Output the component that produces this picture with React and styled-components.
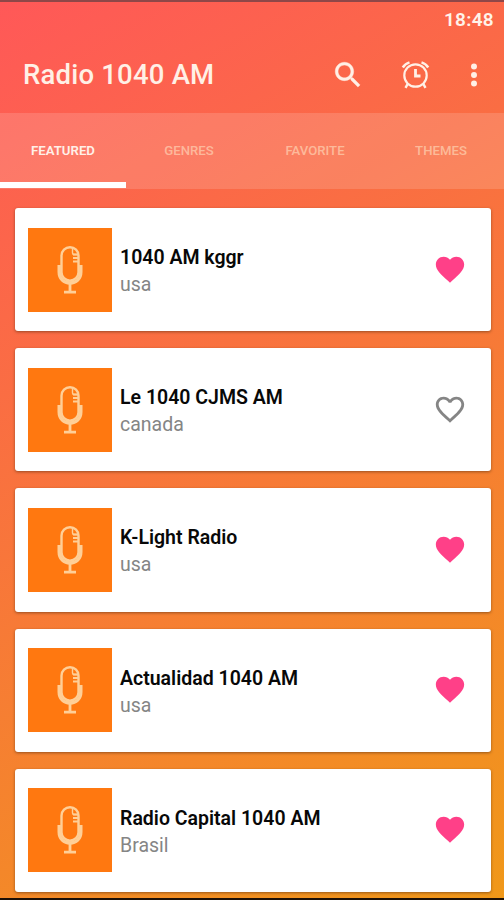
import React from "react";
import styled, { createGlobalStyle } from "styled-components";

const accent = '#ff4088';
const font = 'Roboto, "Liberation Sans", sans-serif';

const GlobalStyle = createGlobalStyle`
  * {
    box-sizing: border-box;
  }

  body {
    margin: 0;
    font-family: ${font};
  }
`;

const Screen = styled.div`
  display: flex;
  flex-direction: column;
  width: 504px;
  height: 900px;
  overflow: hidden;
  border-top: 2px solid #8f4748;
  border-bottom: 2px solid #1c0f05;
  background: linear-gradient(150deg, #ff5858, #f09819) border-box;
`;

const StatusBar = styled.div`
  height: 34px;
  padding: 7px 10px 0 0;
  color: #fff3ea;
  font-size: 19px;
  font-weight: 600;
  line-height: 22px;
  letter-spacing: 0.3px;
  text-align: right;
`;

const Toolbar = styled.header`
  display: flex;
  align-items: center;
  height: 77px;
  padding: 0 13px 0 23px;
  color: #fff0e6;
`;

const Title = styled.h1`
  flex: 1;
  margin: 0;
  font-size: 27.5px;
  font-weight: 500;
  line-height: 32px;
  letter-spacing: 0.2px;
`;

const Action = styled.button`
  display: flex;
  margin: 0 0 0 ${props => props.$gap || 0}px;
  padding: 0;
  border: 0;
  background: none;
  color: inherit;
`;

const Tabs = styled.nav`
  display: grid;
  grid-template-columns: repeat(4, 1fr);
  height: 76px;
  background: rgba(255, 255, 255, 0.15);
`;

const Tab = styled.a`
  display: flex;
  align-items: center;
  justify-content: center;
  border-top: 6px solid transparent;
  border-bottom: 6px solid ${props => (props.$active ? '#fff' : 'transparent')};
  margin-bottom: 1px;
  color: ${props => (props.$active ? '#fff0e8' : 'rgba(255, 225, 195, 0.6)')};
  font-size: 13.2px;
  font-weight: ${props => (props.$active ? 600 : 500)};
`;

const StationList = styled.ul`
  display: flex;
  flex-direction: column;
  gap: 17px;
  margin: 0;
  padding: 19px 13px 0 15px;
  list-style: none;
`;

const Station = styled.li`
  display: flex;
  flex: none;
  align-items: center;
  height: 123.2px;
  padding: 0 24px 0 13px;
  border-radius: 3px;
  background: #fff;
  box-shadow: 0 1px 3px rgba(90, 50, 20, 0.6);
`;

const Cover = styled.div`
  display: flex;
  align-items: center;
  justify-content: center;
  width: 84px;
  height: 84px;
  background: #ff7810;
`;

const Info = styled.div`
  flex: 1;
  padding: 3px 0 0 8px;
`;

const Name = styled.h2`
  margin: 0;
  color: #080808;
  font-size: 19.5px;
  font-weight: 600;
  line-height: 27px;
`;

const Country = styled.p`
  margin: 0;
  color: #858585;
  font-size: 19.5px;
  line-height: 27px;
`;

const SearchIcon = () => (
  <svg width="34" height="34" viewBox="0 0 24 24" fill="currentColor" stroke="currentColor" strokeWidth="0.3">
    <path d="M15.5 14h-.79l-.28-.27C15.41 12.59 16 11.11 16 9.5 16 5.91 13.09 3 9.5 3S3 5.91 3 9.5 5.91 16 9.5 16c1.61 0 3.09-.59 4.23-1.57l.27.28v.79l5 4.99L20.49 19l-4.99-5zm-6 0C7.01 14 5 11.99 5 9.5S7.01 5 9.5 5 14 7.01 14 9.5 11.99 14 9.5 14z" />
  </svg>
);

const AlarmIcon = () => (
  <svg width="34" height="34" viewBox="0 0 34 34" fill="none" stroke="currentColor">
    <circle cx="16.5" cy="17.5" r="11.2" strokeWidth="2.2" />
    <path d="M3.8 9.5Q6 5.8 10.5 4.4M29.2 9.5Q27 5.8 22.5 4.4" strokeWidth="2.5" />
    <path d="M8.7 25.8L6.5 29.8M24.3 25.8L26.5 29.8" strokeWidth="2.4" />
    <path d="M16.5 11V18H21.5" strokeWidth="2.8" />
  </svg>
);

const MoreIcon = () => (
  <svg width="34" height="34" viewBox="0 0 24 24" fill="currentColor">
    <circle cx="12" cy="6" r="2.1" />
    <circle cx="12" cy="12" r="2.1" />
    <circle cx="12" cy="18" r="2.1" />
  </svg>
);

const MicIcon = () => (
  <svg width="28" height="50" viewBox="0 0 28 50" fill="none" stroke="#ffcf97">
    <rect x="5.5" y="2.2" width="17" height="33.5" rx="8.5" strokeWidth="2.4" />
    <path d="M3.2 20V27C3.2 34 8 38 14 38S24.8 34 24.8 27V20" strokeWidth="3.4" />
    <path d="M14 39V46M8 47.2H20" strokeWidth="2.8" />
    <path d="M16.5 3V8Q16.5 9.5 18 9.5H22" strokeWidth="1.4" />
    <path d="M17 9.5H22M17 13H22M17 16.5H22" strokeWidth="2.1" />
  </svg>
);

const Heart = ({ filled }) => (
  <svg width="34" height="34" viewBox="0 0.4 24 24" fill={filled ? accent : '#858585'}>
    {filled ? (
      <path d="M12 21.35l-1.45-1.32C5.4 15.36 2 12.28 2 8.5 2 5.42 4.42 3 7.5 3c1.74 0 3.41.81 4.5 2.09C13.09 3.81 14.76 3 16.5 3 19.58 3 22 5.42 22 8.5c0 3.78-3.4 6.86-8.55 11.54L12 21.35z" />
    ) : (
      <path d="M16.5 3c-1.74 0-3.41.81-4.5 2.09C10.91 3.81 9.24 3 7.5 3 4.42 3 2 5.42 2 8.5c0 3.78 3.4 6.86 8.55 11.54L12 21.35l1.45-1.32C18.6 15.36 22 12.28 22 8.5 22 5.42 19.58 3 16.5 3zm-4.4 15.55l-.1.1-.1-.1C7.14 14.24 4 11.39 4 8.5 4 6.5 5.5 5 7.5 5c1.54 0 3.04.99 3.57 2.36h1.87C13.46 5.99 14.96 5 16.5 5c2 0 3.5 1.5 3.5 3.5 0 2.89-3.14 5.74-7.9 10.05z" />
    )}
  </svg>
);

const tabs = ['FEATURED', 'GENRES', 'FAVORITE', 'THEMES'];

const stations = [
  { name: '1040 AM kggr', country: 'usa', favorite: true },
  { name: 'Le 1040 CJMS AM', country: 'canada', favorite: false },
  { name: 'K-Light Radio', country: 'usa', favorite: true },
  { name: 'Actualidad 1040 AM', country: 'usa', favorite: true },
  { name: 'Radio Capital 1040 AM', country: 'Brasil', favorite: true },
];

export default function App() {
  return (
    <Screen>
      <GlobalStyle />
      <StatusBar>18:48</StatusBar>
      <Toolbar>
        <Title>Radio 1040 AM</Title>
        <Action aria-label="Search"><SearchIcon /></Action>
        <Action aria-label="Alarm" $gap={34}><AlarmIcon /></Action>
        <Action aria-label="More" $gap={24}><MoreIcon /></Action>
      </Toolbar>
      <Tabs>
        {tabs.map((label, i) => (
          <Tab key={label} $active={i === 0}>{label}</Tab>
        ))}
      </Tabs>
      <StationList>
        {stations.map(({ name, country, favorite }) => (
          <Station key={name}>
            <Cover><MicIcon /></Cover>
            <Info>
              <Name>{name}</Name>
              <Country>{country}</Country>
            </Info>
            <Action aria-label="Favorite"><Heart filled={favorite} /></Action>
          </Station>
        ))}
      </StationList>
    </Screen>
  );
}
